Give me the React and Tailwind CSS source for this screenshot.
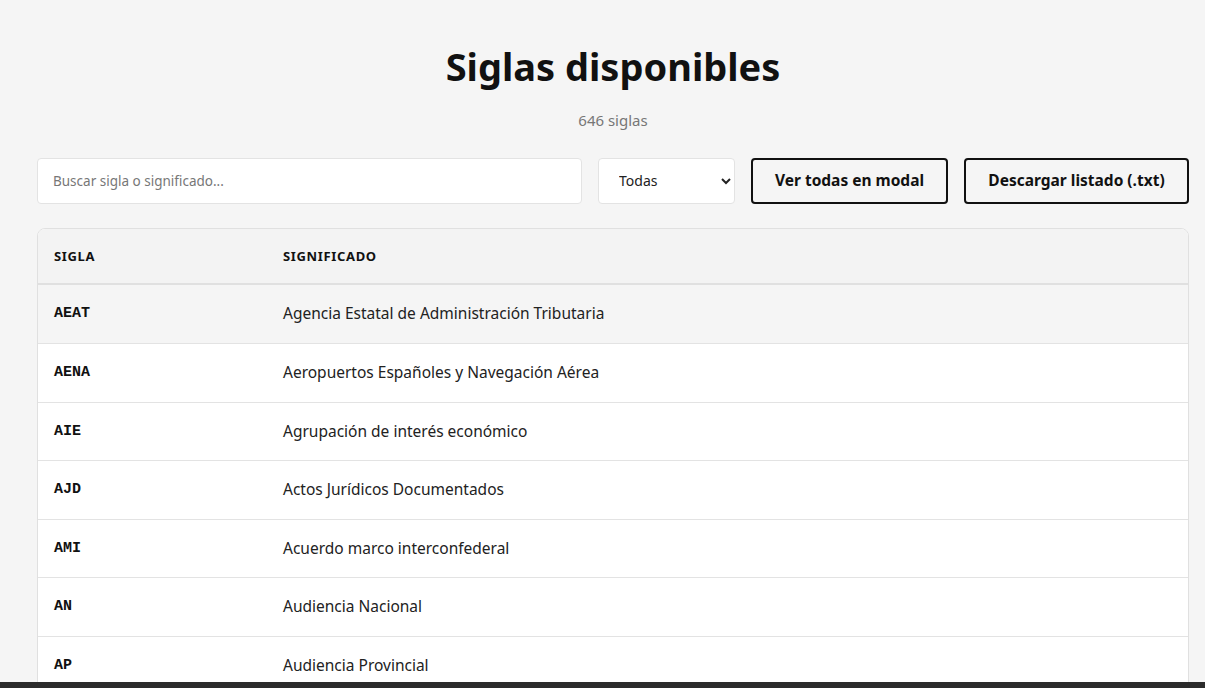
import { useState } from 'react';

const SIGLAS = [
  ['AEAT', 'Agencia Estatal de Administración Tributaria'],
  ['AENA', 'Aeropuertos Españoles y Navegación Aérea'],
  ['AIE', 'Agrupación de interés económico'],
  ['AJD', 'Actos Jurídicos Documentados'],
  ['AMI', 'Acuerdo marco interconfederal'],
  ['AN', 'Audiencia Nacional'],
  ['AP', 'Audiencia Provincial'],
  ['APA', 'Asociación de Padres de Alumnos'],
];

export default function App() {
  const [query, setQuery] = useState('');
  const [hovered, setHovered] = useState('AEAT');

  const rows = SIGLAS.filter(
    ([s, m]) =>
      s.toLowerCase().includes(query.toLowerCase()) ||
      m.toLowerCase().includes(query.toLowerCase())
  );

  return (
    <div className="min-h-screen bg-[#f5f5f5] text-[#222] font-['Noto_Sans',sans-serif]">
      <div className="ml-[37px] w-[1152px] pt-[40px]">
        <h1 className="text-center text-[38px] font-bold leading-[1.4] text-[#111]">Siglas disponibles</h1>
        <p className="mt-[16px] text-center text-[15px] text-[#777]">646 siglas</p>

        <div className="mt-[26px] flex gap-4">
          <input
            value={query}
            onChange={(e) => setQuery(e.target.value)}
            placeholder="Buscar sigla o significado..."
            className="h-[46px] w-[545px] rounded-[4px] border border-[#e3e3e3] bg-white px-[15px] text-[13.5px] placeholder:text-[#777] outline-none"
          />
          <select className="h-[46px] w-[137px] rounded-[4px] border border-[#e3e3e3] bg-white px-[16px] text-[14px] text-[#222] outline-none">
            <option>Todas</option>
          </select>
          <button className="h-[46px] w-[197px] rounded-[4px] border-2 border-[#111] text-[15.5px] font-bold text-[#111]">
            Ver todas en modal
          </button>
          <button className="h-[46px] w-[225px] rounded-[4px] border-2 border-[#111] text-[15.5px] font-bold text-[#111]">
            Descargar listado (.txt)
          </button>
        </div>

        <div className="mt-6 overflow-hidden rounded-lg border border-[#e0e0e0] bg-white">
          <table className="w-full table-fixed border-collapse text-left">
            <thead>
              <tr className="border-b-2 border-[#e0e0e0] bg-[#f3f3f3]">
                <th className="w-[229px] px-4 py-[17px] text-[13px] font-bold uppercase leading-[1.6] tracking-[0.05em] text-[#111]">Sigla</th>
                <th className="px-4 py-[17px] text-[13px] font-bold uppercase leading-[1.6] tracking-[0.05em] text-[#111]">Significado</th>
              </tr>
            </thead>
            <tbody>
              {rows.map(([sigla, significado]) => (
                <tr
                  key={sigla}
                  onMouseEnter={() => setHovered(sigla)}
                  className={`border-b border-[#e3e3e3] ${hovered === sigla ? 'bg-[#f5f5f5]' : 'bg-white'}`}
                >
                  <td className="px-4 py-4 font-['Liberation_Mono',monospace] text-[15px] font-bold leading-[25.6px] text-[#111]">{sigla}</td>
                  <td className="px-4 py-4 text-[15.5px] leading-[25.6px] text-[#222]">{significado}</td>
                </tr>
              ))}
            </tbody>
          </table>
        </div>
      </div>

      {/* window edge strip along the bottom */}
      <div className="fixed inset-x-0 bottom-0 h-[6px] bg-[#2b2b2b]" />
    </div>
  );
}
